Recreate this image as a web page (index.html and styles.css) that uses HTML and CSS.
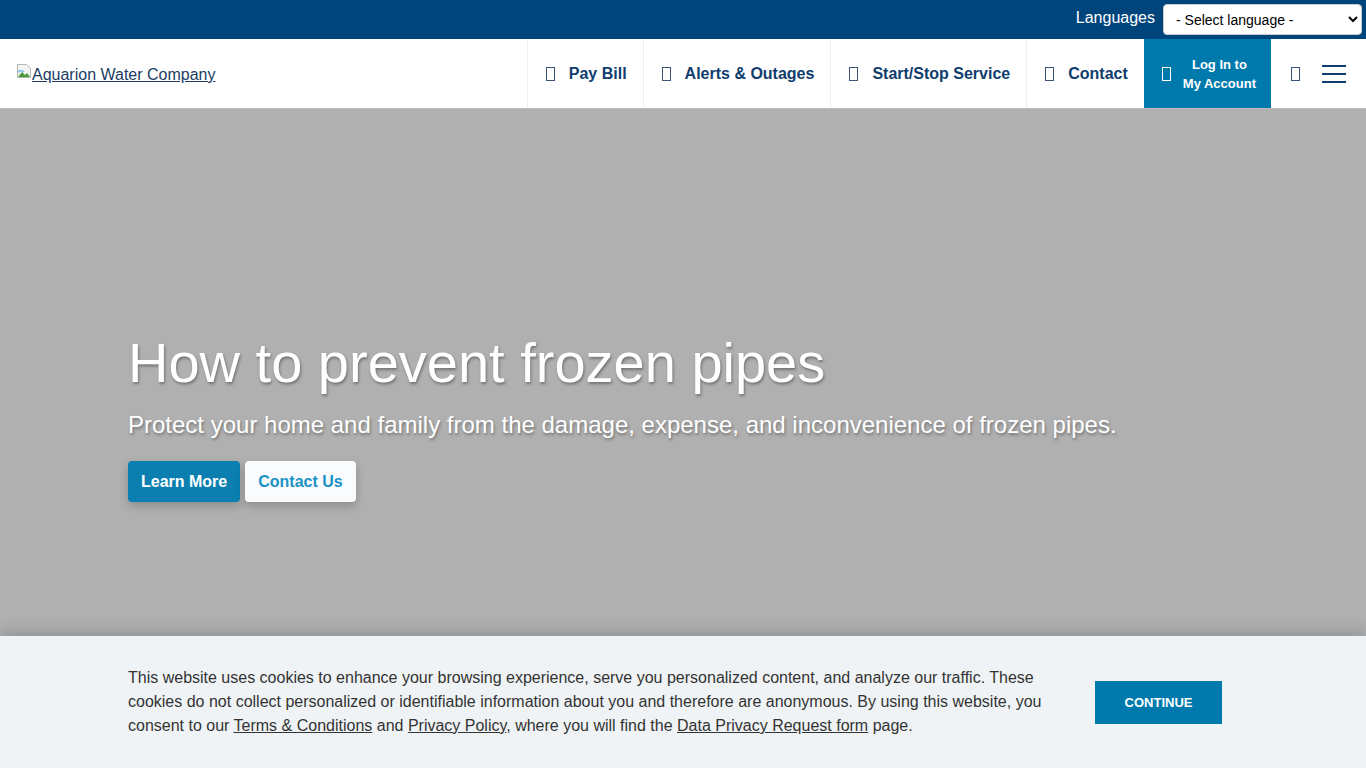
FILE: index.html
```html
<!DOCTYPE html>
<html lang="en">
<head>
    <meta charset="UTF-8">
    <title>Aquarion Water Company</title>
    <link rel="stylesheet" href="styles.css">
</head>
<body>
    <div class="topbar">
        <label for="lang">Languages</label>
        <select id="lang">
            <option>- Select language -</option>
        </select>
    </div>
    <header class="header">
        <a class="logo" href="#">
            <svg class="broken" width="16" height="16" viewBox="0 0 16 16">
                <path d="M1.5 1.5h9l4 4v9h-13z" fill="#f4f4f4" stroke="#b5b5b5"/>
                <path d="M2 14l4-5 3 3 2-2 3 4z" fill="#4a9a3a"/>
                <path d="M2 9c2-2 5-1 6 0" fill="none" stroke="#8fc3e8" stroke-width="2"/>
            </svg><span>Aquarion Water Company</span>
        </a>
        <nav class="nav">
            <a href="#" class="item"><i class="tofu"></i>Pay Bill</a>
            <a href="#" class="item"><i class="tofu"></i>Alerts &amp; Outages</a>
            <a href="#" class="item"><i class="tofu"></i>Start/Stop Service</a>
            <a href="#" class="item"><i class="tofu"></i>Contact</a>
            <a href="#" class="item login"><i class="tofu"></i><span>Log In to<br>My Account</span></a>
            <a href="#" class="search"><i class="tofu"></i></a>
            <a href="#" class="menu"><span></span><span></span><span></span></a>
        </nav>
    </header>
    <section class="hero">
        <div class="hero-text">
            <h1>How to prevent frozen pipes</h1>
            <p>Protect your home and family from the damage, expense, and inconvenience of frozen pipes.</p>
            <div class="btns">
                <a href="#" class="btn primary">Learn More</a>
                <a href="#" class="btn light">Contact Us</a>
            </div>
        </div>
    </section>
    <div class="cookies">
        <p>This website uses cookies to enhance your browsing experience, serve you personalized content, and analyze our traffic. These cookies do not collect personalized or identifiable information about you and therefore are anonymous. By using this website, you consent to our <a href="#">Terms &amp; Conditions</a> and <a href="#">Privacy Policy</a>, where you will find the <a href="#">Data Privacy Request form</a> page.</p>
        <button class="continue">Continue</button>
    </div>
</body>
</html>
```

FILE: styles.css
```css
* {
    margin: 0;
    padding: 0;
    box-sizing: border-box;
}
html, body {
    height: 100%;
    overflow: hidden;
}
body {
    font-family: "Liberation Sans", Arial, sans-serif;
    background: #b0b0b0;
    position: relative;
}
.topbar {
    background: #00447c;
    height: 39px;
    display: flex;
    align-items: center;
    justify-content: flex-end;
    padding-right: 4px;
    gap: 8px;
}
.topbar label {
    color: #fff;
    font-size: 16px;
    margin-top: -4px;
}
.topbar select {
    width: 199px;
    height: 31px;
    border-radius: 4px;
    border: 1px solid #ccc;
    background: #fff;
    font-family: inherit;
    font-size: 14px;
    padding-left: 8px;
    color: #000;
}
.header {
    background: #fff;
    height: 70px;
    display: flex;
    align-items: stretch;
    justify-content: space-between;
    border-bottom: 1px solid #bdbdbd;
}
.logo {
    display: flex;
    align-items: center;
    padding-left: 16px;
    color: #1b3d63;
    font-size: 16px;
    text-decoration: none;
    margin-top: 2px;
}
.logo .broken {
    align-self: flex-start;
    margin-top: 22px;
}
.logo span {
    text-decoration: underline;
}
.nav {
    display: flex;
    align-items: stretch;
    margin-right: 1px;
}
.item {
    display: flex;
    align-items: center;
    padding: 1px 16px 0 18px;
    border-left: 1px solid #eceff2;
    color: #0f3d6e;
    font-weight: bold;
    font-size: 16px;
    text-decoration: none;
}
.tofu {
    display: inline-block;
    width: 9px;
    height: 14px;
    border: 1px solid #3a5578;
    margin-right: 14px;
}
.login {
    background: #0079ad;
    color: #fff;
    font-size: 13px;
    line-height: 19px;
    text-align: center;
    padding: 0 15px 0 18px;
    border-left: 0;
}
.login .tofu {
    border-color: #fff;
    margin-right: 12px;
}
.search {
    display: flex;
    align-items: center;
    padding: 0 4px 0 20px;
}
.search .tofu {
    margin-right: 0;
}
.menu {
    display: flex;
    flex-direction: column;
    justify-content: center;
    gap: 6px;
    padding: 0 19px 0 18px;
}
.menu span {
    display: block;
    width: 24px;
    height: 2px;
    background: #0f3d6e;
}
.hero {
    height: 659px;
    display: flex;
    align-items: center;
    padding-left: 128px;
    padding-bottom: 44px;
}
.hero-text {
    color: #fff;
    text-shadow: 1px 2px 3px rgba(0, 0, 0, 0.35);
}
.hero h1 {
    font-weight: normal;
    font-size: 56px;
    line-height: 64px;
    margin-bottom: 15px;
}
.hero p {
    font-size: 24px;
    line-height: 30px;
    margin-bottom: 21px;
}
.btns {
    display: flex;
    gap: 5px;
}
.btn {
    display: inline-block;
    height: 41px;
    line-height: 41px;
    padding: 0 13px;
    border-radius: 4px;
    font-size: 16px;
    font-weight: bold;
    text-decoration: none;
    text-shadow: none;
    box-shadow: 0 4px 10px rgba(0, 0, 0, 0.2);
}
.primary {
    background: #0a7fb0;
    color: #fff;
}
.light {
    background: #f9fbfc;
    color: #1a93c4;
}
.cookies {
    position: absolute;
    left: 0;
    right: 0;
    bottom: 0;
    height: 132px;
    background: #f0f3f6;
    box-shadow: 0 -4px 14px rgba(60, 60, 70, 0.25);
    display: flex;
    align-items: center;
    padding: 0 144px 0 128px;
    gap: 52px;
}
.cookies p {
    font-size: 16px;
    line-height: 24px;
    color: #333;
    max-width: 920px;
}
.cookies a {
    color: #333;
}
.continue {
    flex: none;
    width: 127px;
    height: 43px;
    background: #0079ad;
    color: #fff;
    border: 0;
    font-family: inherit;
    font-weight: bold;
    font-size: 13px;
    text-transform: uppercase;
}
```
